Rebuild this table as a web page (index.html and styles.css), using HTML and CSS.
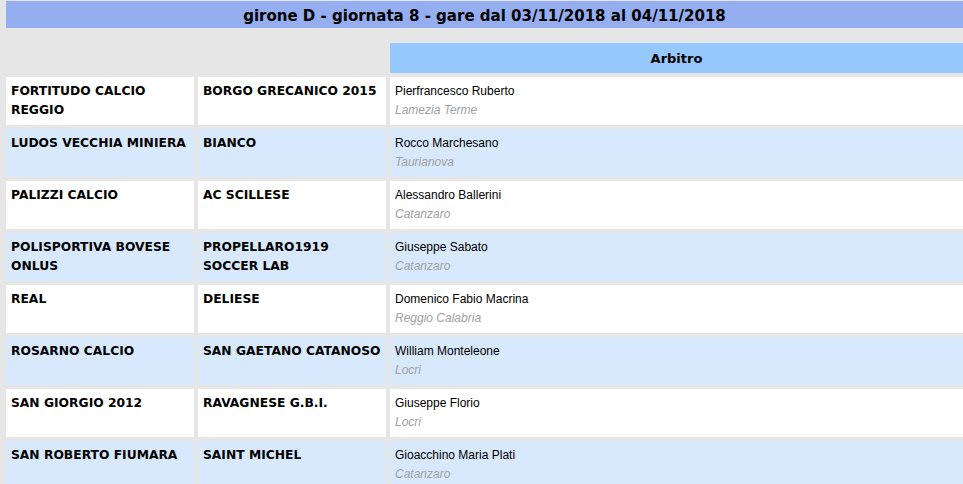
FILE: index.html
```html
<!DOCTYPE html>
<html lang="it">
<head>
<meta charset="utf-8">
<title>girone D - giornata 8</title>
<link rel="stylesheet" href="styles.css">
</head>
<body>
<div class="title">girone D - giornata 8 - gare dal 03/11/2018 al 04/11/2018</div>
<table class="gare">
  <colgroup><col class="c-team"><col class="c-team"><col></colgroup>
  <thead>
    <tr><th class="empty"></th><th class="empty"></th><th class="head">Arbitro</th></tr>
  </thead>
  <tbody>
    <tr class="odd"><td class="team">FORTITUDO CALCIO REGGIO</td><td class="team">BORGO GRECANICO 2015</td><td class="ref"><div class="name">Pierfrancesco Ruberto</div><div class="loc">Lamezia Terme</div></td></tr>
    <tr class="even"><td class="team">LUDOS VECCHIA MINIERA</td><td class="team">BIANCO</td><td class="ref"><div class="name">Rocco Marchesano</div><div class="loc">Taurianova</div></td></tr>
    <tr class="odd"><td class="team">PALIZZI CALCIO</td><td class="team">AC SCILLESE</td><td class="ref"><div class="name">Alessandro Ballerini</div><div class="loc">Catanzaro</div></td></tr>
    <tr class="even"><td class="team">POLISPORTIVA BOVESE ONLUS</td><td class="team">PROPELLARO1919 SOCCER LAB</td><td class="ref"><div class="name">Giuseppe Sabato</div><div class="loc">Catanzaro</div></td></tr>
    <tr class="odd"><td class="team">REAL</td><td class="team">DELIESE</td><td class="ref"><div class="name">Domenico Fabio Macrina</div><div class="loc">Reggio Calabria</div></td></tr>
    <tr class="even"><td class="team">ROSARNO CALCIO</td><td class="team">SAN GAETANO CATANOSO</td><td class="ref"><div class="name">William Monteleone</div><div class="loc">Locri</div></td></tr>
    <tr class="odd"><td class="team">SAN GIORGIO 2012</td><td class="team">RAVAGNESE G.B.I.</td><td class="ref"><div class="name">Giuseppe Florio</div><div class="loc">Locri</div></td></tr>
    <tr class="even"><td class="team">SAN ROBERTO FIUMARA</td><td class="team">SAINT MICHEL</td><td class="ref"><div class="name">Gioacchino Maria Plati</div><div class="loc">Catanzaro</div></td></tr>
  </tbody>
</table>
</body>
</html>
```
FILE: styles.css
```css
html, body {
  margin: 0;
  padding: 0;
  background: #e6e6e6;
  overflow: hidden;
}
body {
  font-family: "DejaVu Sans", Verdana, sans-serif;
  color: #000;
}
.title {
  margin: 1px 0 0 6px;
  height: 27px;
  line-height: 28px;
  background: #94aef0;
  text-align: center;
  font-family: "DejaVu Sans Condensed", "DejaVu Sans", sans-serif;
  font-weight: bold;
  font-size: 16.7px;
}
.gare {
  margin: 11px 0 0 2px;
  width: 965px;
  border-collapse: separate;
  border-spacing: 4px;
  table-layout: fixed;
}
.c-team { width: 188px; }
th, td { padding: 0; }
.empty { background: transparent; }
.head {
  height: 29px;
  background: #96c8fe;
  font-family: "DejaVu Sans", sans-serif;
  font-weight: bold;
  font-size: 13px;
  text-align: center;
  vertical-align: middle;
  padding-top: 1px;
}
.gare tbody tr { height: 48px; }
.odd td { background: #ffffff; }
.even td { background: #d8e9fd; }
td {
  vertical-align: top;
  padding: 5px 5px 0 5px;
  box-sizing: border-box;
}
.team {
  font-family: "DejaVu Sans", Verdana, sans-serif;
  font-weight: bold;
  font-size: 12.3px;
  line-height: 19px;
}
.ref .name {
  font-family: "Liberation Sans", Arial, sans-serif;
  font-size: 12px;
  line-height: 19px;
}
.ref .loc {
  font-family: "Liberation Sans", Arial, sans-serif;
  font-style: italic;
  font-size: 12px;
  line-height: 19px;
  color: #a0a0a0;
}
```
